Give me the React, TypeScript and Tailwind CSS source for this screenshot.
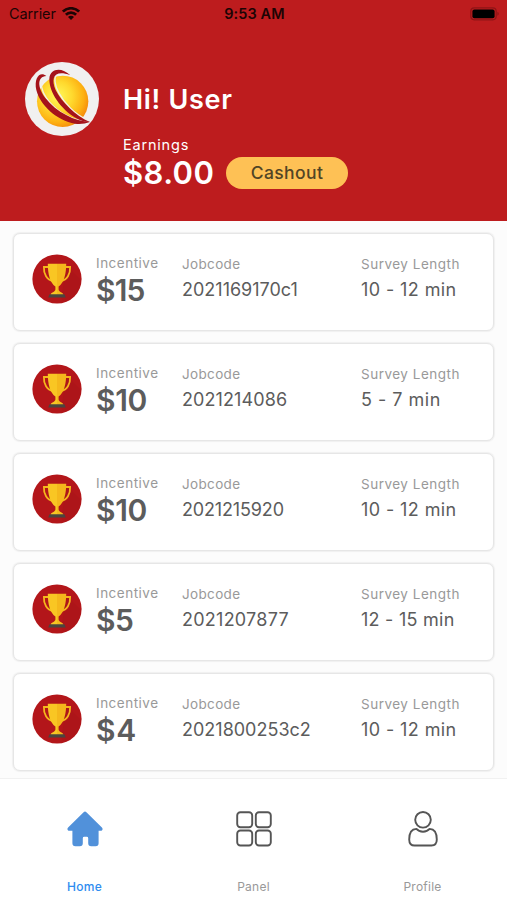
import clsx from 'clsx'

interface Survey {
  incentive: string
  jobcode: string
  length: string
  incentiveClass: string
  jobcodeClass: string
  lengthClass: string
}

const surveys: Survey[] = [
  { incentive: '$15', jobcode: '2021169170c1', length: '10 - 12 min', incentiveClass: 'tracking-[-0.8px]', jobcodeClass: 'tracking-[0px]', lengthClass: 'tracking-[0.4px]' },
  { incentive: '$10', jobcode: '2021214086', length: '5 - 7 min', incentiveClass: 'tracking-[-0.3px]', jobcodeClass: 'tracking-[0.1px]', lengthClass: 'tracking-[0.5px]' },
  { incentive: '$10', jobcode: '2021215920', length: '10 - 12 min', incentiveClass: 'tracking-[-0.3px]', jobcodeClass: 'tracking-[-0.15px]', lengthClass: 'tracking-[0.4px]' },
  { incentive: '$5', jobcode: '2021207877', length: '12 - 15 min', incentiveClass: 'tracking-[-0.4px]', jobcodeClass: 'tracking-[0.25px]', lengthClass: 'tracking-[0.25px]' },
  { incentive: '$4', jobcode: '2021800253c2', length: '10 - 12 min', incentiveClass: 'tracking-[0.8px]', jobcodeClass: 'tracking-[0px]', lengthClass: 'tracking-[0.4px]' },
]

function WifiIcon() {
  return (
    <svg width="18" height="14" viewBox="0 0 18 14" fill="none" stroke="#1c0404" strokeWidth="2.7">
      <path d="M0.9 4.6a11.5 11.5 0 0 1 16.2 0" />
      <path d="M3.9 7.8a7.2 7.2 0 0 1 10.2 0" />
      <path d="M9 13l-3-3a4.2 4.2 0 0 1 6 0z" fill="#1c0404" stroke="none" />
    </svg>
  )
}

function BatteryIcon() {
  return (
    <svg width="30" height="14" viewBox="0 0 30 14">
      <rect x="0.8" y="0.8" width="25.4" height="12" rx="3.5" fill="none" stroke="#8f1416" strokeWidth="1.2" />
      <rect x="2.4" y="2.4" width="22.2" height="8.8" rx="2" fill="#000" />
      <path d="M27.4 4.8c1.8 0.6 1.8 3.4 0 4z" fill="#8f1416" />
    </svg>
  )
}

function Logo() {
  return (
    <svg width="74" height="74" viewBox="0 0 222 222" className="shrink-0">
      <defs>
        <radialGradient id="ball" cx="0.4" cy="0.4" r="0.64">
          <stop offset="0" stopColor="#fff95a" />
          <stop offset="0.45" stopColor="#ffd92e" />
          <stop offset="0.8" stopColor="#fdb011" />
          <stop offset="1" stopColor="#f58a0b" />
        </radialGradient>
      </defs>
      <circle cx="111" cy="111" r="111" fill="#f1f0f0" />
      <circle cx="113" cy="118" r="77" fill="url(#ball)" />
      <path d="M56 52C44 62 50 88 64 108C88 143 122 166 168 176" fill="none" stroke="#f3eee6" strokeWidth="4" />
      <path d="M98 34C84 44 90 72 101 92C118 124 150 158 186 173" fill="none" stroke="#f3eee6" strokeWidth="4" />
      <path d="M64 42C46 26 26 46 34 84C45 130 96 176 150 185C166 187 181 185 195 180C150 178 94 151 61 108C37 76 36 44 64 42Z" fill="#a5131b" />
      <path d="M136 40C111 15 75 18 73 50C72 91 108 142 153 168C168 176 182 181 195 180C152 162 110 120 92 84C76 47 89 22 136 40Z" fill="#a5131b" />
    </svg>
  )
}

function Trophy() {
  return (
    <svg width="50" height="50" viewBox="0 0 50 50">
      <circle cx="25" cy="25" r="24.6" fill="#b3161a" />
      <path d="M35 12L49 26A24.5 24.5 0 0 1 32 48L29 44Z" fill="#ad1519" />
      <path d="M17 13H11.9C11.5 20 15 26 21 27M33 13H38.1C38.5 20 35 26 29 27" fill="none" stroke="#f5b81c" strokeWidth="1.8" />
      <path d="M15.8 9.8H25V41H18.6C18.6 38.3 23.4 38 23.4 35.5V32.5C18 29 15.8 20 15.8 9.8Z" fill="#f9c623" />
      <path d="M34.2 9.8H25V41H31.4C31.4 38.3 26.6 38 26.6 35.5V32.5C32 29 34.2 20 34.2 9.8Z" fill="#f5b81c" />
      <path d="M17.6 40.2H32.4L33.8 43.5H16.2Z" fill="#4a4540" />
    </svg>
  )
}

function HomeIcon() {
  return (
    <svg width="36" height="36" viewBox="0 0 36 36" fill="#5191da">
      <path d="M16.6 1.2a2 2 0 0 1 2.8 0L34.9 16.4c1.3 1.3 0.6 3.3-1.2 3.3H31.6v12.5a3 3 0 0 1-3 3h-4.4a3 3 0 0 1-3-3v-5a1.4 1.4 0 0 0-1.4-1.4h-2.6a1.4 1.4 0 0 0-1.4 1.4v5a3 3 0 0 1-3 3H8.4a3 3 0 0 1-3-3V19.7H2.3c-1.8 0-2.5-2-1.2-3.3z" />
    </svg>
  )
}

function PanelIcon() {
  return (
    <svg width="36" height="36" viewBox="0 0 36 36" fill="none" stroke="#555" strokeWidth="1.9">
      <rect x="1.2" y="1.2" width="15" height="15" rx="3.2" />
      <rect x="19.8" y="1.2" width="15" height="15" rx="3.2" />
      <rect x="1.2" y="19.5" width="15" height="15" rx="3.2" />
      <rect x="19.8" y="19.5" width="15" height="15" rx="3.2" />
    </svg>
  )
}

function ProfileIcon() {
  return (
    <svg width="36" height="36" viewBox="0 0 36 36" fill="none" stroke="#555" strokeWidth="1.9">
      <circle cx="18" cy="8.8" r="7.8" />
      <path d="M11.4 17.9C14.5 21.6 21.5 21.6 24.6 17.9C30.4 18 31.8 24 31.8 28.6C31.8 33 29.6 34.5 26.5 34.5H9.5C6.4 34.5 4.2 33 4.2 28.6C4.2 24 5.6 18 11.4 17.9Z" strokeLinejoin="round" />
    </svg>
  )
}

function SurveyCard({ survey }: { survey: Survey }) {
  return (
    <div className="flex h-[98px] rounded-[7px] border-[1.5px] border-[#e6e6e6] bg-white pl-[18px] shadow-[0_0_1px_1px_#f0f0f0]">
      <div className="w-16 pt-5">
        <Trophy />
      </div>
      <div className="w-[86px] pt-5 whitespace-nowrap">
        <div className="text-[13.5px] leading-[18px] tracking-[0.5px] text-[#999]">Incentive</div>
        <div className={clsx('text-[30px] leading-9 font-semibold text-[#5c5c5c]', survey.incentiveClass)}>
          {survey.incentive}
        </div>
      </div>
      <div className="w-[179px] pt-[21px] whitespace-nowrap">
        <div className="text-[13.5px] leading-[18px] tracking-[0.35px] text-[#999]">Jobcode</div>
        <div className={clsx('mt-[5px] text-[18px] leading-6 text-[#5c5c5c]', survey.jobcodeClass)}>
          {survey.jobcode}
        </div>
      </div>
      <div className="pt-[21px] whitespace-nowrap">
        <div className="text-[13.5px] leading-[18px] tracking-[0.5px] text-[#999]">Survey Length</div>
        <div className={clsx('mt-[5px] text-[18px] leading-6 text-[#5c5c5c]', survey.lengthClass)}>
          {survey.length}
        </div>
      </div>
    </div>
  )
}

export default function App() {
  return (
    <div className="flex h-[900px] w-[507px] flex-col overflow-hidden bg-[#fcfcfc] font-['Inter',sans-serif]">
      {/* Header */}
      <header className="h-[221px] shrink-0 bg-[#bd1c1e]">
        <div className="grid h-7 grid-cols-3 items-center pr-[7px] pl-[9px] text-[#1c0404]">
          <div className="flex items-center gap-[6px] text-[14.5px] tracking-[-0.1px]">
            Carrier
            <WifiIcon />
          </div>
          <div className="text-center text-[14.5px] font-semibold tracking-[0.1px] whitespace-nowrap">9:53 AM</div>
          <div className="flex justify-end">
            <BatteryIcon />
          </div>
        </div>
        <div className="flex gap-6 pt-[34px] pl-[25px] whitespace-nowrap text-white">
          <Logo />
          <div className="pt-[20px]">
            <h1 className="text-[27px] leading-9 font-semibold tracking-[0.7px]">Hi! User</h1>
            <div className="mt-[17px] text-[14.5px] leading-5 tracking-[0.8px]">Earnings</div>
            <div className="flex items-center gap-[13px]">
              <div className="w-[90px] text-[31px] leading-9 font-semibold tracking-[0.4px]">$8.00</div>
              <button className="h-8 w-[122px] rounded-full bg-[#fec155] text-[17.5px] font-medium tracking-[0.4px] text-[#514525]">
                Cashout
              </button>
            </div>
          </div>
        </div>
      </header>

      {/* Survey list */}
      <main className="flex h-[557px] shrink-0 flex-col gap-3 px-[13px] pt-3">
        {surveys.map((survey) => (
          <SurveyCard key={survey.jobcode} survey={survey} />
        ))}
      </main>

      {/* Tab bar */}
      <nav className="grid h-[122px] grid-cols-3 border-t border-[#f1f1f1] bg-white pt-8 text-[12px] tracking-[0.25px] text-[#999]">
        <div className="flex flex-col items-center">
          <HomeIcon />
          <span className="mt-[31px] font-medium text-[#2e8cf0]">Home</span>
        </div>
        <div className="flex flex-col items-center">
          <PanelIcon />
          <span className="mt-[31px]">Panel</span>
        </div>
        <div className="flex flex-col items-center">
          <ProfileIcon />
          <span className="mt-[31px]">Profile</span>
        </div>
      </nav>
    </div>
  )
}
